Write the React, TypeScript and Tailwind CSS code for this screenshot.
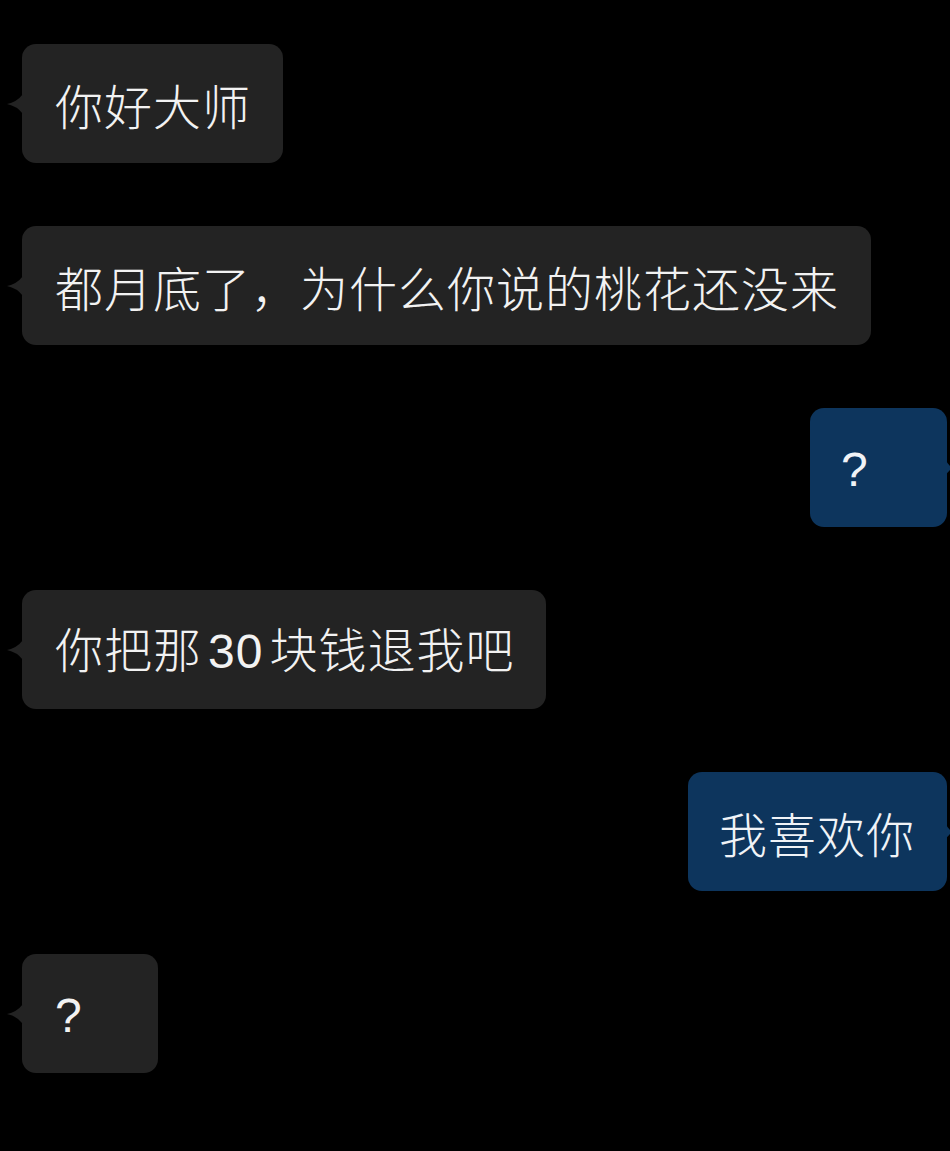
import React from 'react';

type Msg = { text: React.ReactNode; mine: boolean };

const latin = { fontFamily: '"Liberation Sans", "Noto Sans", sans-serif' };

const messages: Msg[] = [
  { text: '你好大师', mine: false },
  { text: '都月底了，为什么你说的桃花还没来', mine: false },
  { text: <span style={latin}>?</span>, mine: true },
  {
    text: (
      <>
        你把那<span className="px-[6px]" style={latin}>30</span>块钱退我吧
      </>
    ),
    mine: false,
  },
  { text: '我喜欢你', mine: true },
  { text: <span style={latin}>?</span>, mine: false },
];

function Bubble({ text, mine }: Msg) {
  return (
    <div className={mine ? 'flex justify-end pr-[3px]' : 'flex justify-start pl-[22px]'}>
      <div
        className={
          mine
            ? 'relative flex h-[119px] min-w-[137px] items-center rounded-[14px] bg-[#0d355d] pl-[31px] pr-[32px] text-[#f0f3f7]'
            : 'relative flex h-[119px] min-w-[136px] items-center rounded-[14px] bg-[#232323] pl-[33px] pr-[32px] text-[#f2f2f2]'
        }
      >
        {mine ? (
          <svg className="absolute right-[-7px] top-1/2 -translate-y-1/2" width="8" height="16" viewBox="0 0 8 16">
            <path d="M0 0 Q2 6 8 8 Q2 10 0 16 Z" fill="#0d355d" />
          </svg>
        ) : (
          <svg className="absolute left-[-15px] top-1/2 -translate-y-1/2" width="16" height="20" viewBox="0 0 16 20">
            <path d="M16 0 Q10 8 0 10 Q10 12 16 20 Z" fill="#232323" />
          </svg>
        )}
        <span className="whitespace-nowrap text-[48px] font-light leading-none tracking-[1px]">{text}</span>
      </div>
    </div>
  );
}

export default function App() {
  return (
    <div
      className="min-h-[1151px] w-[950px] overflow-hidden bg-black pt-[44px]"
      style={{ fontFamily: '"Noto Sans CJK SC", "Noto Sans", sans-serif' }}
    >
      <div className="flex flex-col gap-[63px]">
        {messages.map((m, i) => (
          <Bubble key={i} {...m} />
        ))}
      </div>
    </div>
  );
}
